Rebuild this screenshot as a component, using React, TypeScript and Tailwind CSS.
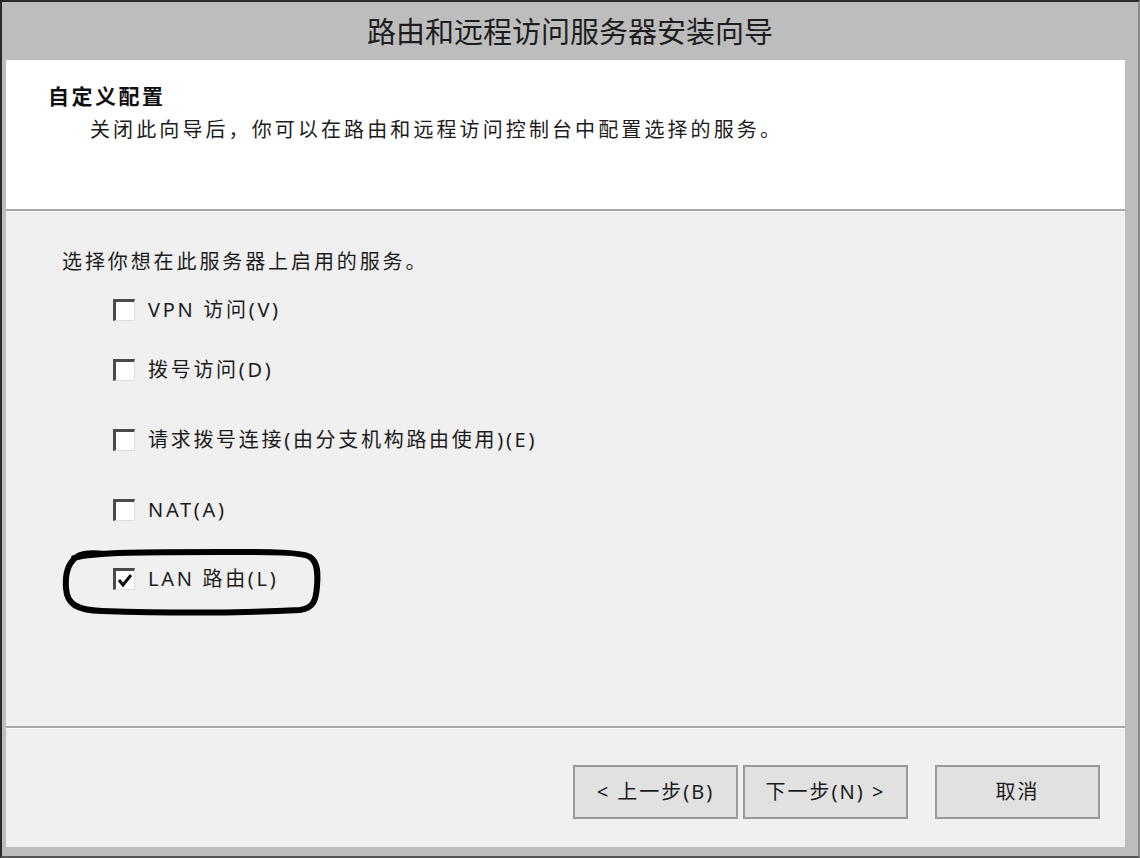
import React from 'react';

const font = { fontFamily: '"Noto Sans", "Noto Sans CJK SC", sans-serif' };

const Checkbox: React.FC<{ checked?: boolean }> = ({ checked }) => (
  <div className="w-[22px] h-[22px] shrink-0 bg-white border-t-[3px] border-l-[3px] border-t-[#4a4a4a] border-l-[#4a4a4a] border-r border-b border-r-[#dcdcdc] border-b-[#dcdcdc] flex items-center justify-center">
    {checked && (
      <svg width="16" height="16" viewBox="0 0 16 16">
        <polyline points="2,8 6,13 14,3" fill="none" stroke="#111" strokeWidth="3" />
      </svg>
    )}
  </div>
);

const Option: React.FC<{ label: string; checked?: boolean; className?: string }> = ({ label, checked, className }) => (
  <div className={`flex items-center h-[28px] pl-[107px] ${className ?? ''}`}>
    <Checkbox checked={checked} />
    <span className="ml-[13px] text-[20px] tracking-[2.7px] leading-[28px] text-[#1c1c1c]">{label}</span>
  </div>
);

const WizButton: React.FC<{ label: string; className?: string }> = ({ label, className }) => (
  <button className={`w-[165px] h-[54px] bg-[#e1e1e1] border-2 border-[#9a9a9a] text-[20px] tracking-[2px] text-[#1c1c1c] ${className ?? ''}`}>
    {label}
  </button>
);

export default function App() {
  return (
    <div style={font} className="w-[1140px] h-[858px] flex flex-col bg-[#bdbdbd] border-t-2 border-l-2 border-b-2 border-r-2 border-t-[#2a2a2a] border-l-[#2a2a2a] border-b-[#555] border-r-[#8a8a8a] overflow-hidden">
      <div className="h-[58px] shrink-0 flex items-center justify-center">
        <h1 className="text-[29px] tracking-normal text-[#1e1e1e] leading-none">路由和远程访问服务器安装向导</h1>
      </div>

      <div className="ml-[4px] mr-[13px] flex flex-col h-[787px]">
        {/* top description */}
        <div className="h-[149px] shrink-0 bg-white pt-[22px] pl-[42px]">
          <div className="text-[21px] font-bold tracking-[2.5px] leading-[28px] text-[#111]">自定义配置</div>
          <div className="mt-[6px] pl-[42px] text-[20px] tracking-[3.1px] leading-[28px] text-[#1c1c1c]">
            关闭此向导后，你可以在路由和远程访问控制台中配置选择的服务。
          </div>
        </div>
        <div className="h-[2px] bg-[#a8a8a8] shrink-0" />
        <div className="h-[1px] bg-[#f8f8f8] shrink-0" />

        {/* options */}
        <div className="h-[514px] shrink-0 bg-[#f0f0f0] pt-[36px]">
          <div className="pl-[56px] text-[20px] tracking-[2.9px] leading-[28px] text-[#1c1c1c]">选择你想在此服务器上启用的服务。</div>
          <Option className="mt-[20px]" label="VPN 访问(V)" />
          <Option className="mt-[32px]" label="拨号访问(D)" />
          <Option className="mt-[42px]" label="请求拨号连接(由分支机构路由使用)(E)" />
          <Option className="mt-[42px]" label="NAT(A)" />
          <div className="relative mt-[41px]">
            <Option label="LAN 路由(L)" checked />
            <svg className="absolute left-[56px] top-[-17px]" width="260" height="68" viewBox="0 0 260 68">
              <path
                d="M 12 10 C 30 4, 90 4, 160 4 C 210 4, 240 4, 248 9 C 256 14, 256 26, 255 38 C 254 52, 252 60, 238 62 C 180 65, 100 65, 40 63 C 14 62, 5 56, 4 40 C 3 26, 6 14, 16 8 C 22 5, 34 5, 42 6"
                fill="none"
                stroke="#000"
                strokeWidth="6"
                strokeLinecap="round"
              />
            </svg>
          </div>
        </div>
        <div className="h-[2px] bg-[#a8a8a8] shrink-0" />
        <div className="h-[1px] bg-[#fafafa] shrink-0" />

        {/* buttons */}
        <div className="flex-1 bg-[#f0f0f0] flex justify-end items-start pt-[36px] pr-[25px]">
          <WizButton label="< 上一步(B)" />
          <WizButton className="ml-[5px]" label="下一步(N) >" />
          <WizButton className="ml-[27px]" label="取消" />
        </div>
      </div>
    </div>
  );
}
